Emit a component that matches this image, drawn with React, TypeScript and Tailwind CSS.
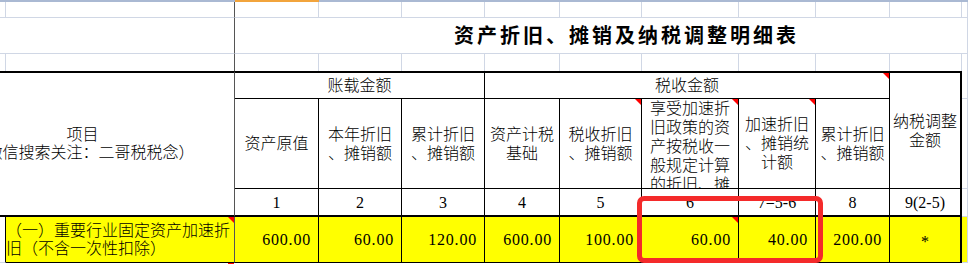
import React from "react";

const COLS = [
  "col-start-1",
  "col-start-2",
  "col-start-3",
  "col-start-4",
  "col-start-5",
  "col-start-6",
  "col-start-7",
  "col-start-8",
  "col-start-9",
  "col-start-10",
  "col-start-11",
  "col-start-12",
];

function Tri() {
  return (
    <div className="absolute top-0 right-0 w-0 h-0 border-l-[6px] border-l-transparent border-t-[6px] border-t-[#ff0000]" />
  );
}

function GridlineRow({ row, bottom }: { row: string; bottom: boolean }) {
  return (
    <>
      {COLS.map((c, i) => (
        <div
          key={c}
          className={
            row +
            " " +
            c +
            " border-r " +
            (i === 1 ? "border-r-[#555555]" : "border-r-[#d0d7e5]") +
            (bottom ? " border-b border-b-[#d0d7e5]" : "")
          }
        />
      ))}
    </>
  );
}

const headers: { col: string; lines: string[]; tri?: boolean; top?: boolean }[] = [
  { col: "col-start-3", lines: ["资产原值"] },
  { col: "col-start-4", lines: ["本年折旧", "、摊销额"] },
  { col: "col-start-5", lines: ["累计折旧", "、摊销额"] },
  { col: "col-start-6", lines: ["资产计税", "基础"] },
  { col: "col-start-7", lines: ["税收折旧", "、摊销额"], tri: true },
  {
    col: "col-start-8",
    lines: ["享受加速折", "旧政策的资", "产按税收一", "般规定计算", "的折旧、摊", "销额"],
    tri: true,
    top: true,
  },
  { col: "col-start-9", lines: ["加速折旧", "、摊销统", "计额"], tri: true },
  { col: "col-start-10", lines: ["累计折旧", "、摊销额"] },
];

const nums: { col: string; text: string; thick?: boolean }[] = [
  { col: "col-start-3", text: "1" },
  { col: "col-start-4", text: "2" },
  { col: "col-start-5", text: "3" },
  { col: "col-start-6", text: "4" },
  { col: "col-start-7", text: "5" },
  { col: "col-start-8", text: "6" },
  { col: "col-start-9", text: "7=5-6" },
  { col: "col-start-10", text: "8" },
  { col: "col-start-11", text: "9(2-5)", thick: true },
];

const vals: { col: string; text: string; tri?: boolean }[] = [
  { col: "col-start-3", text: "600.00" },
  { col: "col-start-4", text: "60.00" },
  { col: "col-start-5", text: "120.00" },
  { col: "col-start-6", text: "600.00" },
  { col: "col-start-7", text: "100.00" },
  { col: "col-start-8", text: "60.00", tri: true },
  { col: "col-start-9", text: "40.00" },
  { col: "col-start-10", text: "200.00" },
];

export default function App() {
  return (
    <div className="relative w-[968px] h-[264px] overflow-hidden bg-white text-black font-['Liberation_Serif','Noto_Sans_CJK_SC',serif] font-light text-[16px]">
      <div className="grid grid-cols-[6px_229px_84px_83px_83px_75px_82px_97px_77px_74px_72px_6px] grid-rows-[2px_16px_36px_17px_28px_90px_28px_46px_1px]">
        {/* top header strip */}
        <div className="row-start-1 col-start-1 col-span-2 bg-[#aab9d3]" />
        <div className="row-start-1 col-start-3 bg-[#f2a43c]" />
        <div className="row-start-1 col-start-4 col-span-9 bg-[#aab9d3]" />

        {/* empty spreadsheet row */}
        <GridlineRow row="row-start-2" bottom={true} />

        {/* title row */}
        <div className="row-start-3 col-start-1 col-span-2 border-r border-r-[#555555] border-b border-b-[#d0d7e5]" />
        <div className="row-start-3 col-start-3 col-span-10 border-r border-r-[#d0d7e5] border-b border-b-[#d0d7e5] flex items-center pl-[219px]">
          <span className="whitespace-nowrap font-bold text-[20px] leading-[24px] tracking-[3px]">
            资产折旧、摊销及纳税调整明细表
          </span>
        </div>

        {/* empty spreadsheet row */}
        <GridlineRow row="row-start-4" bottom={false} />

        {/* 项目 */}
        <div className="row-start-5 row-span-3 col-start-1 col-span-2 border-t-2 border-t-black border-b-2 border-b-black border-r border-r-[#555555] overflow-hidden flex items-center">
          <div className="w-[165px] shrink-0 flex flex-col items-center leading-[18px]">
            <div className="whitespace-nowrap">项目</div>
            <div className="whitespace-nowrap">（微信搜索关注：二哥税税念）</div>
          </div>
        </div>

        {/* group headers */}
        <div className="row-start-5 col-start-3 col-span-3 border-t-2 border-t-black border-b border-b-black border-r border-r-black flex items-center justify-center">
          <span className="whitespace-nowrap leading-[19px]">账载金额</span>
        </div>
        <div className="relative row-start-5 col-start-6 col-span-5 border-t-2 border-t-black border-b border-b-black border-r border-r-black flex items-center justify-center">
          <span className="whitespace-nowrap leading-[19px]">税收金额</span>
          <Tri />
        </div>
        <div className="row-start-5 row-span-2 col-start-11 border-t-2 border-t-black border-b border-b-black border-r-2 border-r-black flex flex-col items-center justify-center leading-[19px]">
          <div className="whitespace-nowrap">纳税调整</div>
          <div className="whitespace-nowrap">金额</div>
        </div>
        <div className="row-start-5 col-start-12 border-r border-r-[#d0d7e5] border-b border-b-[#d0d7e5]" />

        {/* sub headers */}
        {headers.map((h) => (
          <div
            key={h.col}
            className={
              "row-start-6 " +
              h.col +
              " relative overflow-hidden border-b border-b-black border-r border-r-black flex flex-col items-center leading-[19px] " +
              (h.top ? "justify-start" : "justify-center")
            }
          >
            {h.lines.map((l) => (
              <div key={l} className="whitespace-nowrap">
                {l}
              </div>
            ))}
            {h.tri ? <Tri /> : null}
          </div>
        ))}
        <div className="row-start-6 col-start-12 border-r border-r-[#d0d7e5] border-b border-b-[#d0d7e5]" />

        {/* column numbers */}
        {nums.map((n) => (
          <div
            key={n.col}
            className={
              "row-start-7 " +
              n.col +
              " border-b-2 border-b-black flex items-center justify-center " +
              (n.thick ? "border-r-2 border-r-black" : "border-r border-r-black")
            }
          >
            <span className="whitespace-nowrap leading-[19px]">{n.text}</span>
          </div>
        ))}
        <div className="row-start-7 col-start-12 border-r border-r-[#d0d7e5] border-b border-b-[#d0d7e5]" />

        {/* data row */}
        <div className="row-start-8 col-start-1 bg-white border-r border-r-black border-b border-b-[#d0d7e5]" />
        <div className="relative row-start-8 col-start-2 bg-[#ffff00] border-r border-r-[#555555] border-b border-b-black flex flex-col justify-center leading-[18px]">
          <div className="whitespace-nowrap">（一）重要行业固定资产加速折</div>
          <div className="whitespace-nowrap">旧（不含一次性扣除）</div>
          <Tri />
        </div>
        {vals.map((v) => (
          <div
            key={v.col}
            className={
              "relative row-start-8 " +
              v.col +
              " bg-[#ffff00] border-r border-r-black border-b border-b-black flex items-center justify-end pr-[7px]"
            }
          >
            <span className="whitespace-nowrap tracking-[0.8px] leading-[19px]">{v.text}</span>
            {v.tri ? <Tri /> : null}
          </div>
        ))}
        <div className="row-start-8 col-start-11 bg-[#ffff00] border-r-2 border-r-black border-b border-b-black flex items-center justify-center">
          <span className="leading-[19px] mt-[4px]">*</span>
        </div>
        <div className="row-start-8 col-start-12 bg-[#ffff00] border-r border-r-[#d0d7e5] border-b border-b-[#d0d7e5]" />

        {/* partial next row */}
        <div className="relative row-start-9 col-start-1 col-span-12 bg-white">
          <div className="absolute left-[228px] top-0 w-[6px] h-[1px] bg-[#ff0000]" />
        </div>
      </div>

      {/* red annotation box */}
      <div className="absolute left-[637px] top-[196px] w-[186px] h-[67px] border-[5px] border-[#f42a2a] rounded-[7px]" />
    </div>
  );
}
